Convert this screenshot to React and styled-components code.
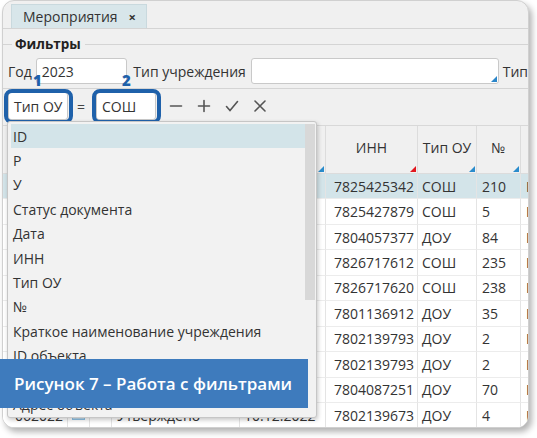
import React from 'react';
import styled, { createGlobalStyle } from 'styled-components';

const Global = createGlobalStyle`
  html, body { margin: 0; padding: 0; background: #fff; }
  body { font-family: "Open Sans", "Noto Sans", sans-serif; color: #333; }
  * { box-sizing: border-box; }
`;

const Page = styled.div`
  position: relative;
  width: 537px;
  height: 438px;
  overflow: hidden;
`;

const Card = styled.div`
  position: relative;
  margin-left: 2px;
  width: 527px;
  height: 428px;
  background: #f0f0f0;
  border: 1px solid #d0d0d0;
  border-radius: 12px;
  box-shadow: 3px 4px 6px rgba(0, 0, 0, 0.3);
  overflow: hidden;
  display: flex;
  flex-direction: column;
`;

const TabBar = styled.div`
  height: 28px;
  flex: none;
  border-bottom: 1px solid #d4d4d4;
  padding-left: 8px;
  display: flex;
  align-items: flex-end;
`;

const Tab = styled.div`
  height: 24px;
  width: 136px;
  background: #d8e6ea;
  border: 1px solid #c9d9de;
  border-bottom: none;
  display: flex;
  align-items: center;
  padding-left: 11px;
  font-size: 14px;
  color: #333;
`;

const TabClose = styled.span`
  margin-left: 11px;
  font-weight: 700;
  font-size: 13px;
`;

const LegendRow = styled.div`
  margin-top: 7px;
  height: 16px;
  display: flex;
  align-items: center;
  flex: none;
`;

const LegendLine = styled.div`
  height: 1px;
  background: #d4d4d4;
  width: ${p => (p.$grow ? 'auto' : '9px')};
  flex: ${p => (p.$grow ? 1 : 'none')};
`;

const LegendText = styled.div`
  font-weight: 700;
  font-size: 13.5px;
  padding: 0 4px 0 3px;
  color: #222;
`;

const FilterRow = styled.div`
  display: flex;
  align-items: center;
  height: ${p => p.$h || 26}px;
  margin-top: ${p => p.$mt || 0}px;
  flex: none;
  white-space: nowrap;
`;

const Label = styled.span`
  font-size: 14px;
  color: #333;
  margin-left: ${p => p.$ml || 0}px;
`;

const Input = styled.div`
  position: relative;
  width: ${p => p.$w}px;
  height: ${p => p.$h || 26}px;
  margin-left: ${p => p.$ml || 0}px;
  background: #fff;
  border: 1px solid #c9c9c9;
  border-radius: 3px;
  font-size: 14px;
  color: #333;
  display: flex;
  align-items: center;
  padding-left: ${p => p.$pl || 5}px;
`;

const CornerMark = styled.span`
  position: absolute;
  right: 1px;
  bottom: 1px;
  width: 0;
  height: 0;
  border-left: 6px solid transparent;
  border-bottom: 6px solid #2b86c9;
`;

const Separator = styled.div`
  height: 1px;
  background: #d4d4d4;
  margin-top: 4px;
  flex: none;
`;

const Highlight = styled.div`
  position: absolute;
  left: -5px;
  top: -4px;
  right: -6px;
  bottom: -5px;
  border: 4px solid #1f61aa;
  border-radius: 8px;
  pointer-events: none;
`;

const Marker = styled.span`
  position: absolute;
  top: -20px;
  left: ${p => p.$left}px;
  font-size: 15px;
  font-weight: 800;
  color: #1f61aa;
  line-height: 1;
`;

const Eq = styled.span`
  font-size: 14px;
  margin-left: 9px;
  color: #444;
`;

const Tools = styled.div`
  display: flex;
  align-items: center;
  gap: 14px;
  margin-left: 13px;
  color: #555;
`;

const Grid = styled.div`
  margin-top: 5px;
  display: grid;
  grid-template-columns: 65px 22px 22px 128px 86px 92px 59px 44px 220px;
  grid-template-rows: 48px repeat(10, 25.45px);
  background: #fff;
  border-top: 1px solid #d8d8d8;
  flex: none;
`;

const HeadCell = styled.div`
  position: relative;
  background: #f0f0f0;
  border-right: 1px solid #dcdcdc;
  border-bottom: 1px solid #dcdcdc;
  display: flex;
  align-items: center;
  justify-content: center;
  font-size: 14px;
  color: #333;
  padding-bottom: 4px;
  white-space: nowrap;
  overflow: hidden;
`;

const HeadMark = styled.span`
  position: absolute;
  right: 1px;
  bottom: 1px;
  width: 0;
  height: 0;
  border-left: 6px solid transparent;
  border-bottom: 6px solid ${p => (p.$red ? '#e2161d' : '#2a8ccc')};
`;

const Cell = styled.div`
  background: ${p => (p.$sel ? '#d3e4e9' : '#fff')};
  border-right: 1px solid #e4e4e4;
  border-bottom: 1px solid #ececec;
  font-size: 14px;
  color: #333;
  display: flex;
  align-items: center;
  padding-left: ${p => p.$pl ?? 6}px;
  white-space: nowrap;
  overflow: hidden;
`;

const DocIcon = styled.span`
  display: inline-block;
  width: 13px;
  height: 9px;
  background: #bcdcf0;
  border: 1px solid #8fc3e6;
`;

const Dropdown = styled.div`
  position: absolute;
  left: 7px;
  top: 121px;
  width: 310px;
  height: 297px;
  background: #f2f2f2;
  border: 1px solid #c6c6c6;
  border-radius: 3px;
  box-shadow: 1px 2px 4px rgba(0, 0, 0, 0.22);
  padding: 2px 0 0 3px;
  overflow: hidden;
  display: flex;
`;

const List = styled.div`
  flex: 1;
  display: flex;
  flex-direction: column;
`;

const Item = styled.div`
  height: 24.4px;
  flex: none;
  display: flex;
  align-items: center;
  padding-left: 2px;
  font-size: 14px;
  color: #333;
  background: ${p => (p.$active ? '#d3e4e9' : 'transparent')};
  white-space: nowrap;
`;

const ScrollTrack = styled.div`
  width: 10px;
  flex: none;
  margin-right: 1px;
  display: flex;
  flex-direction: column;
`;

const ScrollThumb = styled.div`
  height: 176px;
  background: #d8d8d8;
`;

const Banner = styled.div`
  position: absolute;
  left: 0;
  top: 359px;
  width: 308px;
  height: 49px;
  background: #3e7bbd;
  color: #fff;
  font-family: "Open Sans", "Noto Sans", sans-serif;
  font-weight: 600;
  font-size: 17px;
  display: flex;
  align-items: center;
  padding-left: 14px;
  white-space: nowrap;
`;

const rows = [
  ['062017', 'Утверждено', '10.12.2022', '7825425342', 'СОШ', '210', 'ГБОУ СОШ №210'],
  ['062018', 'Утверждено', '10.12.2022', '7825427879', 'СОШ', '5', 'ГБОУ СОШ №5'],
  ['062019', 'Утверждено', '10.12.2022', '7804057377', 'ДОУ', '84', 'ГБДОУ №84'],
  ['062020', 'Утверждено', '10.12.2022', '7826717612', 'СОШ', '235', 'ГБОУ СОШ №235'],
  ['062021', 'Утверждено', '10.12.2022', '7826717620', 'СОШ', '238', 'ГБОУ СОШ №238'],
  ['062022', 'Утверждено', '10.12.2022', '7801136912', 'ДОУ', '35', 'ГБДОУ №35'],
  ['062023', 'Утверждено', '10.12.2022', '7802139793', 'ДОУ', '2', 'ГБДОУ №2'],
  ['062024', 'Утверждено', '10.12.2022', '7802139793', 'ДОУ', '2', 'ГБДОУ №2'],
  ['062025', 'Утверждено', '10.12.2022', '7804087251', 'ДОУ', '70', 'ГБДОУ №70'],
  ['062022', 'Утверждено', '10.12.2022', '7802139673', 'ДОУ', '4', 'ГБДОУ №4'],
];

const items = [
  'ID', 'Р', 'У', 'Статус документа', 'Дата', 'ИНН', 'Тип ОУ', '№',
  'Краткое наименование учреждения', 'ID объекта', 'ID субъекта', 'Адрес объекта',
];

const Icon = ({ children }) => (
  <svg width="14" height="14" viewBox="0 0 14 14" fill="none" stroke="#555" strokeWidth="1.6" strokeLinecap="round">
    {children}
  </svg>
);

export default function App() {
  return (
    <Page>
      <Global />
      <Card>
        <TabBar>
          <Tab>
            Мероприятия<TabClose>×</TabClose>
          </Tab>
        </TabBar>
        <LegendRow>
          <LegendLine />
          <LegendText>Фильтры</LegendText>
          <LegendLine $grow />
        </LegendRow>
        <FilterRow $mt={6}>
          <Label $ml={5}>Год</Label>
          <Input $w={93} $ml={4}>2023</Input>
          <Label $ml={6}>Тип учреждения</Label>
          <Input $w={252} $ml={5}>
            <CornerMark />
          </Input>
          <Label $ml={4}>Тип</Label>
        </FilterRow>
        <Separator />
        <FilterRow $mt={3} $h={28}>
          <Input $w={60} $h={28} $ml={5} $pl={5}>
            Тип ОУ
            <Highlight />
            <Marker $left={24}>1</Marker>
          </Input>
          <Eq>=</Eq>
          <Input $w={60} $h={28} $ml={11} $pl={5}>
            СОШ
            <Highlight />
            <Marker $left={25}>2</Marker>
          </Input>
          <Tools>
            <Icon><path d="M1.5 7h11" /></Icon>
            <Icon><path d="M1.5 7h11M7 1.5v11" /></Icon>
            <Icon><path d="M1.5 7.5l3.5 4 7.5-9" /></Icon>
            <Icon><path d="M2 2l10 10M12 2L2 12" /></Icon>
          </Tools>
        </FilterRow>
        <Grid>
          <HeadCell>ID<HeadMark /></HeadCell>
          <HeadCell>Р</HeadCell>
          <HeadCell>У</HeadCell>
          <HeadCell>Статус документа<HeadMark /></HeadCell>
          <HeadCell>Дата<HeadMark /></HeadCell>
          <HeadCell>ИНН<HeadMark $red /></HeadCell>
          <HeadCell>Тип ОУ<HeadMark /></HeadCell>
          <HeadCell>№<HeadMark /></HeadCell>
          <HeadCell>Наименование</HeadCell>
          {rows.map((r, i) => {
            const sel = i === 0;
            return (
              <React.Fragment key={i}>
                <Cell $sel={sel} $pl={12}>{r[0]}</Cell>
                <Cell $sel={sel} $pl={4}><DocIcon /></Cell>
                <Cell $sel={sel} />
                <Cell $sel={sel} $pl={5}>{r[1]}</Cell>
                <Cell $sel={sel} $pl={4}>{r[2]}</Cell>
                <Cell $sel={sel} $pl={8}>{r[3]}</Cell>
                <Cell $sel={sel} $pl={4}>{r[4]}</Cell>
                <Cell $sel={sel} $pl={5}>{r[5]}</Cell>
                <Cell $sel={sel} $pl={5}>{r[6]}</Cell>
              </React.Fragment>
            );
          })}
        </Grid>
      </Card>
      <Dropdown>
        <List>
          {items.map((t, i) => (
            <Item key={i} $active={i === 0}>{t}</Item>
          ))}
        </List>
        <ScrollTrack>
          <ScrollThumb />
        </ScrollTrack>
      </Dropdown>
      <Banner>Рисунок 7 – Работа с фильтрами</Banner>
    </Page>
  );
}
